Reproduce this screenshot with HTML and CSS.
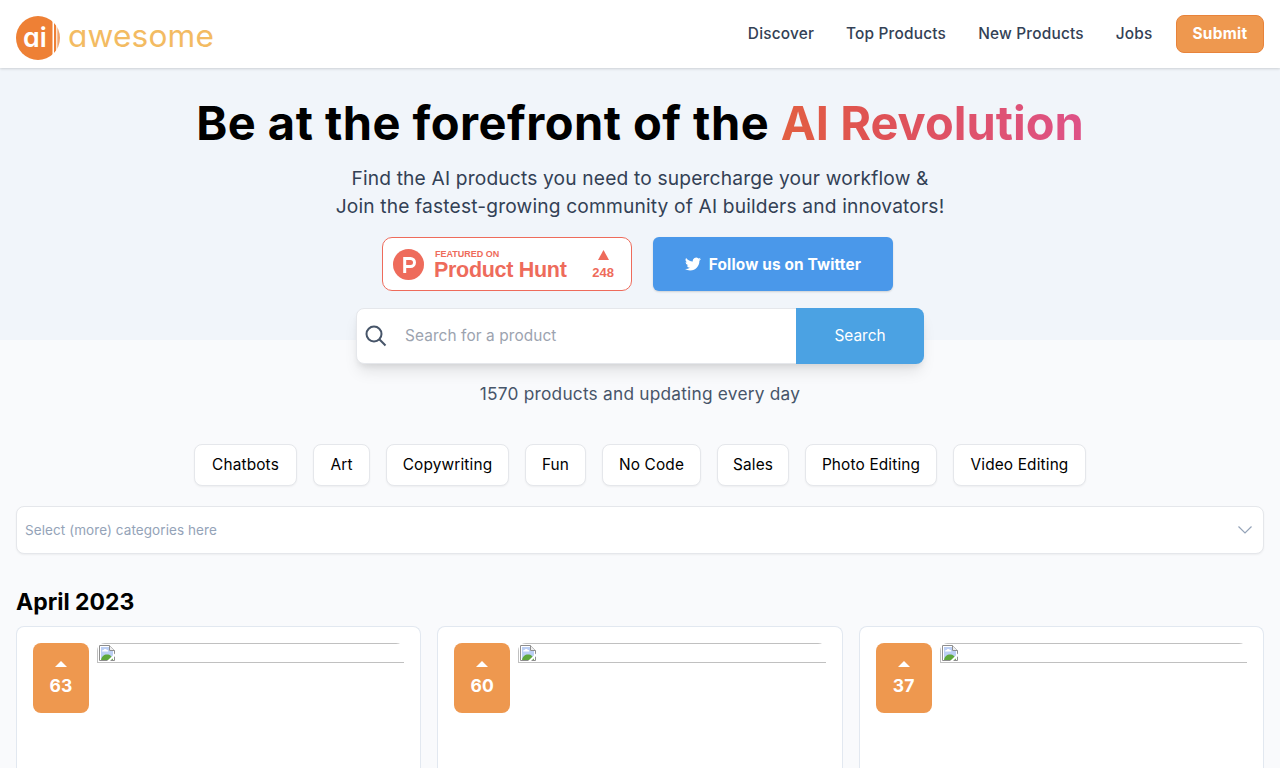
FILE: index.html
```html
<!DOCTYPE html>
<html lang="en">
<head>
    <meta charset="UTF-8">
    <meta name="viewport" content="width=device-width, initial-scale=1.0">
    <title>AI Awesome</title>
    <link rel="stylesheet" href="styles.css">
</head>
<body>
    <svg class="defs" width="0" height="0">
        <symbol id="broken" viewBox="0 0 16 16">
            <path d="M.5.5h10l5 5v10H.5z" fill="#fff" stroke="#8e8e8e"/>
            <path d="M2 2h8v4h4v8H2z" fill="#bccff4"/>
            <path d="M3 6.500c0-1.300 1-1.500 1.500-1.500C5 3.500 7.500 3.500 8 5c1 0 1.300.7 1.300 1.500z" fill="#fff"/>
            <path d="M2 15c.5-3.500 3-5.500 6-5.500s5.500 2 6 5.500z" fill="#5fa83c"/>
            <path d="M10.500.5v5h5" fill="#eee" stroke="#8e8e8e"/>
            <path d="M8 16l8-7.500v2.700L11 16z" fill="#fff"/>
        </symbol>
    </svg>
    <header class="navbar">
        <a class="logo" href="#">
            <svg width="200" height="46" viewBox="0 0 200 46">
                <defs>
                    <clipPath id="disc"><circle cx="22" cy="23" r="22"/></clipPath>
                </defs>
                <g clip-path="url(#disc)" fill="#ee8035">
                    <rect x="0" y="0" width="36.500" height="46"/>
                    <rect x="38" y="0" width="2.200" height="46"/>
                    <rect x="41.300" y="0" width="2.700" height="46" fill="#f2a46c"/>
                </g>
                <text class="logo-ai" x="7" y="31.500" textLength="24" lengthAdjust="spacingAndGlyphs">ai</text>
                <text class="logo-name" x="52" y="32.300" textLength="146" lengthAdjust="spacingAndGlyphs">awesome</text>
            </svg>
        </a>
        <nav class="menu">
            <a class="w66" href="#">Discover</a>
            <a class="w100" href="#">Top Products</a>
            <a class="w105" href="#">New Products</a>
            <a class="w36" href="#">Jobs</a>
        </nav>
        <a class="submit" href="#">Submit</a>
    </header>

    <section class="hero">
        <h1>Be at the forefront of the <span>AI Revolution</span></h1>
        <p class="line1">Find the AI products you need to supercharge your workflow &amp;</p>
        <p class="line2">Join the fastest-growing community of AI builders and innovators!</p>
        <div class="badges">
            <a class="hunt" href="#">
                <svg width="31" height="31" viewBox="0 0 31 31">
                    <circle cx="15.500" cy="15.500" r="15.500" fill="#ee6b5b"/>
                    <path d="M11.700 24V9.500h5.800a3.700 3.700 0 0 1 0 8h-5.500" fill="none" stroke="#fff" stroke-width="3"/>
                </svg>
                <span class="hunt-text"><small>FEATURED ON</small><b>Product Hunt</b></span>
                <span class="hunt-votes">
                    <svg width="11" height="10" viewBox="0 0 11 10"><path d="M5.500 0L11 10H0z" fill="#ee6b5b"/></svg>
                    248
                </span>
            </a>
            <a class="twitter" href="#">
                <svg width="16" height="16" viewBox="0 0 24 24" fill="#fff"><path d="M23.950 4.570a10 10 0 0 1-2.820.770 4.960 4.960 0 0 0 2.160-2.720c-.950.550-2 .950-3.120 1.180a4.920 4.920 0 0 0-8.380 4.480A13.930 13.930 0 0 1 1.640 3.160a4.920 4.920 0 0 0 1.520 6.570 4.900 4.900 0 0 1-2.230-.610v.060a4.920 4.920 0 0 0 3.950 4.830 5 5 0 0 1-2.210.080 4.940 4.940 0 0 0 4.600 3.420A9.870 9.870 0 0 1 0 19.540a13.990 13.990 0 0 0 7.550 2.210c9.050 0 14-7.500 14-13.980l-.020-.630a9.940 9.940 0 0 0 2.460-2.550z"/></svg>
                <span>Follow us on Twitter</span>
            </a>
        </div>
    </section>

    <main>
        <form class="search">
            <svg width="22" height="22" viewBox="0 0 22 22" fill="none" stroke="#475569" stroke-width="2"><circle cx="9" cy="9" r="7.500"/><path d="M14.300 14.300l6.200 6.200"/></svg>
            <span class="placeholder">Search for a product</span>
            <button type="button">Search</button>
        </form>
        <p class="count">1570 products and updating every day</p>

        <div class="tags">
            <a class="t1" href="#">Chatbots</a>
            <a class="t2" href="#">Art</a>
            <a class="t3" href="#">Copywriting</a>
            <a class="t4" href="#">Fun</a>
            <a class="t5" href="#">No Code</a>
            <a class="t6" href="#">Sales</a>
            <a class="t7" href="#">Photo Editing</a>
            <a class="t8" href="#">Video Editing</a>
        </div>

        <div class="select">
            <span>Select (more) categories here</span>
            <svg width="16" height="10" viewBox="0 0 16 10" fill="none" stroke="#94a3b8" stroke-width="1.200"><path d="M1.500 1.500L8 8l6.500-6.500"/></svg>
        </div>

        <h2>April 2023</h2>
        <div class="cards">
            <article class="card">
                <div class="vote"><svg width="12" height="6" viewBox="0 0 12 6"><path d="M6 0l6 6H0z" fill="#fff"/></svg>63</div>
                <div class="thumb"><div class="missing"><svg width="16" height="16"><use href="#broken"/></svg></div></div>
            </article>
            <article class="card">
                <div class="vote"><svg width="12" height="6" viewBox="0 0 12 6"><path d="M6 0l6 6H0z" fill="#fff"/></svg>60</div>
                <div class="thumb"><div class="missing"><svg width="16" height="16"><use href="#broken"/></svg></div></div>
            </article>
            <article class="card">
                <div class="vote"><svg width="12" height="6" viewBox="0 0 12 6"><path d="M6 0l6 6H0z" fill="#fff"/></svg>37</div>
                <div class="thumb"><div class="missing"><svg width="16" height="16"><use href="#broken"/></svg></div></div>
            </article>
        </div>
    </main>
</body>
</html>
```
FILE: styles.css
```css
* {
    box-sizing: border-box;
}
body {
    margin: 0;
    height: 768px;
    overflow: hidden;
    background-color: #f9fafc;
    font-family: Inter, "Open Sans", sans-serif;
    font-size: 15.4px;
    letter-spacing: 0.15px;
    color: #000;
}
a {
    color: inherit;
    text-decoration: none;
    white-space: nowrap;
}
svg {
    display: block;
    flex: none;
}
.defs {
    display: none;
}
.navbar {
    position: relative;
    display: flex;
    align-items: center;
    height: 68px;
    padding: 0 16px;
    background-color: #fff;
    box-shadow: 0 1px 3px rgba(0, 0, 0, 0.1), 0 1px 2px rgba(0, 0, 0, 0.06);
}
.logo {
    margin-top: 7px;
}
.logo-ai {
    font-size: 27px;
    font-weight: 600;
    fill: #fff;
    font-feature-settings: "cv11";
}
.logo-name {
    font-size: 31px;
    font-weight: 400;
    fill: #f3bb62;
    font-feature-settings: "cv11";
}
.menu {
    display: flex;
    gap: 32px;
    margin-left: auto;
    padding-bottom: 1px;
    font-weight: 500;
    letter-spacing: 0.2px;
    color: #334155;
}
.menu a {
    display: flex;
    justify-content: center;
}
.w66 { width: 66px; }
.w100 { width: 100px; }
.w105 { width: 106px; }
.w36 { width: 36px; }
.submit {
    display: flex;
    align-items: center;
    justify-content: center;
    width: 88px;
    height: 38px;
    margin-left: 24px;
    padding-bottom: 2px;
    background-color: #ee984f;
    border: 1px solid #e8833a;
    border-radius: 8px;
    color: #fff;
    font-weight: 700;
    letter-spacing: 0.3px;
}
.hero {
    height: 272px;
    padding-top: 32px;
    background-color: #f1f5fa;
    text-align: center;
}
h1 {
    margin: 0 0 16px;
    font-size: 47px;
    line-height: 46px;
    padding-bottom: 2px;
    font-weight: 700;
    letter-spacing: 0.48px;
    white-space: nowrap;
}
h1 span {
    background: linear-gradient(to right, #e25f41, #df5253 30%, #de5288);
    -webkit-background-clip: text;
    background-clip: text;
    color: transparent;
    letter-spacing: 0;
}
.hero p {
    margin: 0;
    font-size: 19.2px;
    line-height: 28px;
    letter-spacing: 0.16px;
    color: #334155;
    white-space: nowrap;
}
.badges {
    display: flex;
    justify-content: center;
    gap: 21px;
    margin-top: 17px;
    padding-right: 5px;
}
.hunt {
    display: flex;
    align-items: center;
    width: 250px;
    height: 54px;
    padding: 0 17px 0 10px;
    background-color: #fff;
    border: 1px solid #ee6b5b;
    border-radius: 10px;
    color: #ee6b5b;
    font-family: "Liberation Sans", Arial, sans-serif;
    letter-spacing: 0;
    text-align: left;
}
.hunt-text {
    display: flex;
    flex-direction: column;
    margin-left: 10px;
    padding-top: 2px;
}
.hunt-text small {
    padding-left: 1px;
    font-size: 9px;
    line-height: 10px;
    font-weight: 700;
}
.hunt-text b {
    font-size: 21.5px;
    line-height: 22px;
    letter-spacing: -0.3px;
}
.hunt-votes {
    display: flex;
    flex-direction: column;
    align-items: center;
    gap: 6px;
    margin-left: auto;
    padding-top: 1px;
    font-size: 13px;
    line-height: 14px;
    font-weight: 700;
}
.twitter {
    display: flex;
    align-items: center;
    justify-content: center;
    gap: 8px;
    width: 240px;
    height: 54px;
    background-color: #4a98ea;
    border-radius: 6px;
    box-shadow: 0 1px 2px rgba(0, 0, 0, 0.15);
    color: #fff;
    font-weight: 700;
}
main {
    padding: 0 16px;
}
.search {
    position: relative;
    display: flex;
    align-items: center;
    width: 568px;
    height: 56px;
    margin: -32px auto 0;
    padding-left: 8px;
    background-color: #fff;
    border: 1px solid #e5e7eb;
    border-radius: 8px;
    box-shadow: 0 10px 15px -3px rgba(0, 0, 0, 0.1), 0 4px 6px -2px rgba(0, 0, 0, 0.08);
}
.placeholder {
    margin-left: 18px;
    padding-bottom: 1px;
    letter-spacing: 0.1px;
    color: #9ca3af;
}
.search button {
    width: 128px;
    height: 56px;
    margin: 0 -1px 0 auto;
    padding-bottom: 2px;
    background-color: #4ba2e3;
    border: none;
    border-radius: 0 8px 8px 0;
    color: #fff;
    font: inherit;
}
.count {
    margin: 16px 0 36px;
    font-size: 17.3px;
    line-height: 28px;
    letter-spacing: 0.22px;
    color: #475569;
    text-align: center;
}
.tags {
    display: flex;
    justify-content: center;
    gap: 16px;
}
.tags a {
    display: flex;
    align-items: center;
    justify-content: center;
    height: 42px;
    padding-bottom: 1px;
    background-color: #fff;
    border: 1px solid #e5e7eb;
    border-radius: 8px;
    box-shadow: 0 1px 2px rgba(0, 0, 0, 0.05);
}
.t1 { width: 103px; }
.t2 { width: 57px; }
.t3 { width: 123px; }
.t4 { width: 61px; }
.t5 { width: 99px; }
.t6 { width: 72px; }
.t7 { width: 132px; }
.t8 { width: 133px; }
.select {
    display: flex;
    align-items: center;
    justify-content: space-between;
    height: 48px;
    margin-top: 20px;
    padding: 0 10px 0 8px;
    background-color: #fff;
    border: 1px solid #e5e7eb;
    border-radius: 8px;
    box-shadow: 0 1px 2px rgba(0, 0, 0, 0.05);
    color: #94a3b8;
    font-size: 13.5px;
    letter-spacing: 0.08px;
}
h2 {
    margin: 32px 0 8px;
    font-size: 23px;
    line-height: 32px;
    font-weight: 700;
    letter-spacing: 0;
}
.cards {
    display: grid;
    grid-template-columns: repeat(3, 1fr);
    gap: 16px;
}
.card {
    display: flex;
    gap: 8px;
    height: 142px;
    padding: 16px;
    background-color: #fff;
    border: 1px solid #e2e8f0;
    border-bottom: none;
    border-radius: 8px 8px 0 0;
}
.vote {
    display: flex;
    flex-direction: column;
    align-items: center;
    width: 56px;
    height: 70px;
    padding-top: 18px;
    gap: 5px;
    background-color: #ee984f;
    border-radius: 8px;
    color: #fff;
    font-size: 17.5px;
    line-height: 28px;
    font-weight: 700;
}
.thumb {
    flex: 1;
    height: 20px;
    border-radius: 8px 8px 0 0;
    overflow: hidden;
}
.missing {
    height: 20px;
    padding: 1px;
    border: 1px solid #c0c0c0;
    border-right: none;
}
```
